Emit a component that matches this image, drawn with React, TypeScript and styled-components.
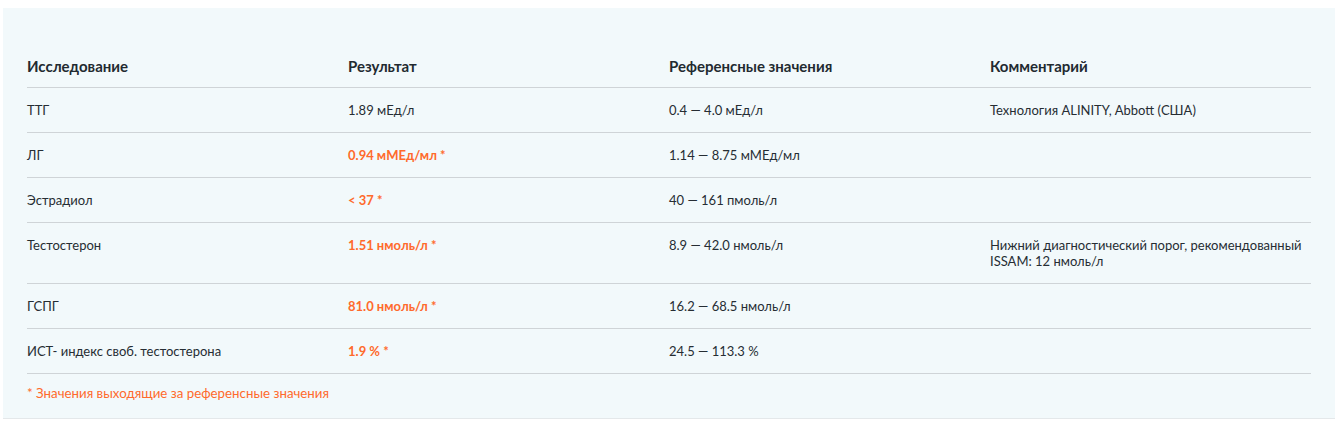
import { Fragment } from "react";
import styled, { createGlobalStyle } from "styled-components";

const GlobalStyle = createGlobalStyle`
  body {
    margin: 0;
    background: #ffffff;
    font-family: Lato, "Noto Sans", sans-serif;
  }
`;

interface ResultRow {
  name: string;
  value: string;
  outOfRange?: boolean;
  reference: string;
  comment?: string;
}

const rows: ResultRow[] = [
  {
    name: "ТТГ",
    value: "1.89 мЕд/л",
    reference: "0.4 — 4.0 мЕд/л",
    comment: "Технология ALINITY, Abbott (США)",
  },
  {
    name: "ЛГ",
    value: "0.94 мМЕд/мл",
    outOfRange: true,
    reference: "1.14 — 8.75 мМЕд/мл",
  },
  {
    name: "Эстрадиол",
    value: "< 37",
    outOfRange: true,
    reference: "40 — 161 пмоль/л",
  },
  {
    name: "Тестостерон",
    value: "1.51 нмоль/л",
    outOfRange: true,
    reference: "8.9 — 42.0 нмоль/л",
    comment: "Нижний диагностический порог, рекомендованный ISSAM: 12 нмоль/л",
  },
  {
    name: "ГСПГ",
    value: "81.0 нмоль/л",
    outOfRange: true,
    reference: "16.2 — 68.5 нмоль/л",
  },
  {
    name: "ИСТ- индекс своб. тестостерона",
    value: "1.9 %",
    outOfRange: true,
    reference: "24.5 — 113.3 %",
  },
];

const Panel = styled.section`
  margin: 8px 6px 0 3px;
  padding: 36px 24px 17px;
  background: #f2f9fb;
  border-bottom: 1px solid #e4e8ea;
`;

const Table = styled.div`
  display: grid;
  grid-template-columns: repeat(4, 1fr);
`;

const HeadCell = styled.div`
  padding: 14px 0 13px;
  line-height: 16px;
  font-size: 15px;
  font-weight: 700;
  color: #222a30;
  border-bottom: 1px solid #cfd4d7;
`;

const Cell = styled.div<{ $alert?: boolean }>`
  padding: 14px 6px 14px 0;
  line-height: 16px;
  font-size: 13px;
  font-weight: ${(p) => (p.$alert ? 700 : 400)};
  color: ${(p) => (p.$alert ? "#ff6a2c" : "#262d33")};
  border-bottom: 1px solid #cfd4d7;
`;

const Note = styled.p`
  margin: 11px 0 0;
  line-height: 16px;
  font-size: 13.3px;
  color: #ff6a2c;
`;

export default function App() {
  return (
    <>
      <GlobalStyle />
      <Panel>
        <Table>
          <HeadCell>Исследование</HeadCell>
          <HeadCell>Результат</HeadCell>
          <HeadCell>Референсные значения</HeadCell>
          <HeadCell>Комментарий</HeadCell>
          {rows.map((row) => (
            <Fragment key={row.name}>
              <Cell>{row.name}</Cell>
              <Cell $alert={row.outOfRange}>
                {row.value}
                {row.outOfRange ? " *" : ""}
              </Cell>
              <Cell>{row.reference}</Cell>
              <Cell>{row.comment ?? ""}</Cell>
            </Fragment>
          ))}
        </Table>
        <Note>* Значения выходящие за референсные значения</Note>
      </Panel>
    </>
  );
}
